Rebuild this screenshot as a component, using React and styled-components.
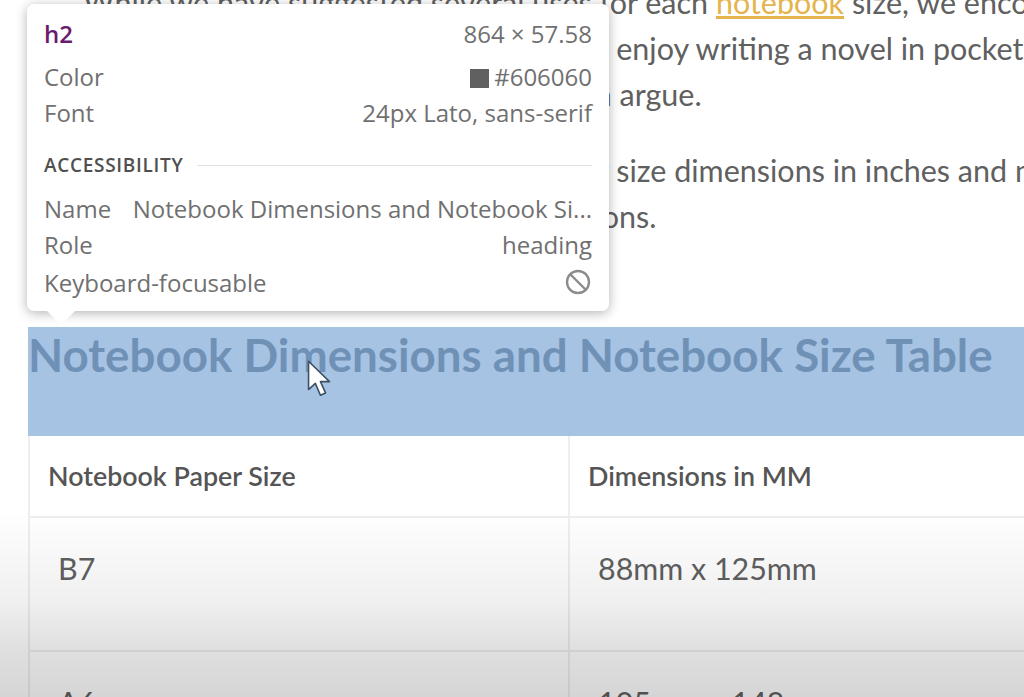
import React from 'react';
import styled, { createGlobalStyle } from 'styled-components';

const GlobalStyle = createGlobalStyle`
  html, body {
    margin: 0;
    padding: 0;
    background: #fff;
  }
`;

const Page = styled.div`
  position: relative;
  width: 1024px;
  height: 697px;
  overflow: hidden;
  background: #fff;
  font-family: Lato, "Liberation Sans", sans-serif;
  color: #606060;
`;

const Article = styled.div`
  margin-top: -21px;
  padding-left: 28px;
`;

const Paragraph = styled.div`
  padding-left: 55px;
  margin-bottom: 30px;
  font-size: 30.5px;
  line-height: 46px;
`;

const Line = styled.div`
  white-space: nowrap;
`;

const TextLink = styled.a`
  color: #e5b44c;
  text-decoration: underline;
`;

const Heading = styled.h2`
  margin: 88px 0 0;
  height: 109px;
  font-size: 45.7px;
  font-weight: 700;
  line-height: 56px;
  white-space: nowrap;
  color: #7091b6;
  background: #a6c3e4;
`;

const Table = styled.table`
  width: 996px;
  table-layout: fixed;
  border-collapse: collapse;
`;

const HeadCell = styled.th`
  height: 80px;
  padding: 0 18px;
  text-align: left;
  font-size: 26.8px;
  font-weight: 600;
  color: #555555;
  border: 2px solid #eeeeee;
  border-top: 0;
`;

const Cell = styled.td`
  box-sizing: border-box;
  height: 134px;
  padding: 30px 28px 0;
  vertical-align: top;
  font-size: 30.4px;
  line-height: 40px;
  border: 2px solid #eeeeee;
`;

const BottomFade = styled.div`
  position: absolute;
  left: 0;
  right: 0;
  bottom: 0;
  height: 187px;
  background: linear-gradient(
    to bottom,
    rgba(0, 0, 0, 0),
    rgba(0, 0, 0, 0.06) 48%,
    rgba(0, 0, 0, 0.125) 75%,
    rgba(0, 0, 0, 0.165)
  );
  pointer-events: none;
`;

const Tooltip = styled.div`
  position: absolute;
  left: 27px;
  top: 4px;
  width: 582px;
  height: 307px;
  box-sizing: border-box;
  padding: 11px 17px 0;
  background: #fff;
  border-radius: 7px;
  box-shadow: 0 2px 12px rgba(0, 0, 0, 0.3);
  font-family: "Open Sans", "Liberation Sans", sans-serif;
  font-size: 24px;
  color: #707070;

  &::after {
    content: '';
    position: absolute;
    left: 20px;
    bottom: -14px;
    border-left: 14px solid transparent;
    border-right: 14px solid transparent;
    border-top: 14px solid #fff;
  }
`;

const Row = styled.div`
  display: flex;
  align-items: center;
  justify-content: space-between;
  height: ${props => props.$height || 36}px;
  margin-bottom: ${props => props.$after || 0}px;
  white-space: nowrap;
`;

const Tag = styled.span`
  color: #6a1b6e;
  font-weight: 600;
`;

const Swatch = styled.span`
  display: inline-block;
  width: 19px;
  height: 19px;
  margin-right: 5px;
  background: #606060;
  vertical-align: -2px;
`;

const SectionRow = styled.div`
  display: flex;
  align-items: center;
  gap: 14px;
  margin-top: 23px;
  margin-bottom: 13px;
  height: 24px;
`;

const SectionTitle = styled.span`
  font-size: 19px;
  font-weight: 600;
  letter-spacing: 0.7px;
  color: #505050;
`;

const Rule = styled.div`
  flex: 1;
  height: 1px;
  background: #e2e2e2;
`;

const Cursor = styled.svg`
  position: absolute;
  left: 305px;
  top: 359px;
`;

const App = () => (
  <Page>
    <GlobalStyle />
    <Article>
      <Paragraph>
        <Line>While we have suggested several uses for each <TextLink>notebook</TextLink> size, we encourage you</Line>
        <Line>to pick these as you want. You may also enjoy writing a novel in pocket size notebooks</Line>
        <Line>and there is really nobody now who can argue.</Line>
      </Paragraph>
      <Paragraph>
        <Line>Below is a list of all our notebook paper size dimensions in inches and millimeters</Line>
        <Line>with each of the most popular size options.</Line>
      </Paragraph>
      <Heading>Notebook Dimensions and Notebook Size Table</Heading>
      <Table>
        <colgroup>
          <col width="540" />
          <col width="456" />
        </colgroup>
        <thead>
          <tr>
            <HeadCell>Notebook Paper Size</HeadCell>
            <HeadCell>Dimensions in MM</HeadCell>
          </tr>
        </thead>
        <tbody>
          <tr>
            <Cell>B7</Cell>
            <Cell>88mm x 125mm</Cell>
          </tr>
          <tr>
            <Cell>A6</Cell>
            <Cell>105mm x 148mm</Cell>
          </tr>
        </tbody>
      </Table>
    </Article>
    <BottomFade />
    <Tooltip>
      <Row $after={7}>
        <Tag>h2</Tag>
        <span>864 × 57.58</span>
      </Row>
      <Row>
        <span>Color</span>
        <span><Swatch />#606060</span>
      </Row>
      <Row>
        <span>Font</span>
        <span>24px Lato, sans-serif</span>
      </Row>
      <SectionRow>
        <SectionTitle>ACCESSIBILITY</SectionTitle>
        <Rule />
      </SectionRow>
      <Row>
        <span>Name</span>
        <span>Notebook Dimensions and Notebook Si...</span>
      </Row>
      <Row>
        <span>Role</span>
        <span>heading</span>
      </Row>
      <Row $height={40}>
        <span>Keyboard-focusable</span>
        <svg width="28" height="28" viewBox="0 0 28 28" fill="none" stroke="#8c8c8c" strokeWidth="2.4">
          <circle cx="14" cy="14" r="11" />
          <line x1="6.5" y1="6.5" x2="21.5" y2="21.5" />
        </svg>
      </Row>
    </Tooltip>
    <Cursor width="32" height="43" viewBox="0 0 28 38">
      <path d="M3 2 L3 27 L9 21.5 L13.5 32 L18 30 L13.5 20 L21.5 20 Z" fill="#fff" stroke="#3d4f63" strokeWidth="1.4" strokeLinejoin="round" />
    </Cursor>
  </Page>
);

export default App;
